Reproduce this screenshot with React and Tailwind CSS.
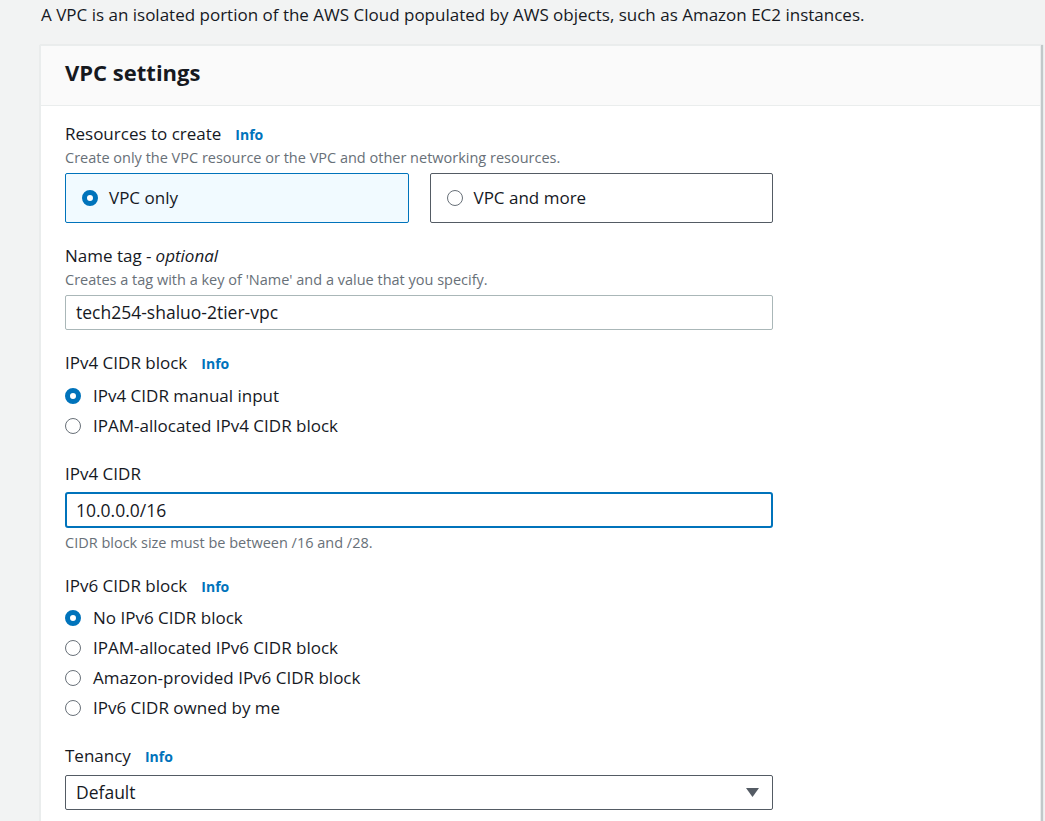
import React from "react";

const Info = () => (
  <span className="ml-[14px] text-[14px] font-bold text-[#0073bb]">Info</span>
);

const Radio = ({ checked }) =>
  checked ? (
    <span className="inline-block w-[16px] h-[16px] rounded-full border-[5px] border-[#0073bb] bg-white shrink-0" />
  ) : (
    <span className="inline-block w-[16px] h-[16px] rounded-full border-[1.5px] border-[#687078] bg-white shrink-0" />
  );

const RadioRow = ({ checked, label }) => (
  <div className="flex items-center h-[30px]">
    <Radio checked={checked} />
    <span className="ml-[12px] text-[17px] text-[#16191f]">{label}</span>
  </div>
);

const Label = ({ children, info }) => (
  <div className="flex items-baseline text-[17px] text-[#16191f] leading-[24px]">
    {children}
    {info && <Info />}
  </div>
);

const Hint = ({ children }) => (
  <div className="text-[14.5px] text-[#687078] leading-[20px]">{children}</div>
);

export default function App() {
  return (
    <div
      className="min-h-screen bg-[#f2f3f3] overflow-hidden"
      style={{ fontFamily: '"Open Sans", "Noto Sans", sans-serif' }}
    >
      {/* Intro */}
      <p className="pl-[41px] pt-[3px] text-[17px] text-[#16191f] leading-[24px]">
        A VPC is an isolated portion of the AWS Cloud populated by AWS objects, such as Amazon EC2 instances.
      </p>

      {/* Card */}
      <div className="ml-[40px] mt-[18px] w-[1001px] bg-white border border-[#eaeded] shadow-[1px_1px_1px_1px_rgba(0,28,36,0.2)]">
        <div className="h-[60px] bg-[#fafafa] border-b border-[#eaeded] flex items-center px-[24px] pb-[8px]">
          <h2 className="text-[22px] font-bold text-[#16191f] leading-none">VPC settings</h2>
        </div>

        <div className="px-[24px] pt-[16px] pb-[20px] w-[756px]">
          {/* Resources to create */}
          <Label info>Resources to create</Label>
          <div className="mt-[1px]">
            <Hint>Create only the VPC resource or the VPC and other networking resources.</Hint>
          </div>
          <div className="mt-[5px] grid grid-cols-2 gap-[21px]">
            <div className="h-[50px] flex items-center px-[16px] rounded-[2px] border border-[#0073bb] bg-[#f1faff]">
              <Radio checked />
              <span className="ml-[11px] text-[17px] text-[#16191f]">VPC only</span>
            </div>
            <div className="h-[50px] flex items-center px-[16px] rounded-[2px] border border-[#545b64]">
              <Radio />
              <span className="ml-[11px] text-[17px] text-[#16191f]">VPC and more</span>
            </div>
          </div>

          {/* Name tag */}
          <div className="mt-[21px]">
            <Label>
              Name tag - <span className="italic ml-[4px]">optional</span>
            </Label>
            <div className="mt-[2px]">
              <Hint>Creates a tag with a key of 'Name' and a value that you specify.</Hint>
            </div>
            <div className="mt-[5px] h-[35px] border border-[#aab7b8] rounded-[2px] flex items-center px-[10px] text-[17.5px] text-[#16191f]">
              tech254-shaluo-2tier-vpc
            </div>
          </div>

          {/* IPv4 CIDR block */}
          <div className="mt-[21px]">
            <Label info>IPv4 CIDR block</Label>
            <div className="mt-[5px]">
              <RadioRow checked label="IPv4 CIDR manual input" />
              <RadioRow label="IPAM-allocated IPv4 CIDR block" />
            </div>
          </div>

          {/* IPv4 CIDR */}
          <div className="mt-[21px]">
            <Label>IPv4 CIDR</Label>
            <div className="mt-[6px] h-[36px] border-2 border-[#0073bb] rounded-[3px] flex items-center px-[9px] text-[17.5px] text-[#16191f]">
              10.0.0.0/16
            </div>
            <div className="mt-[5px]">
              <Hint>CIDR block size must be between /16 and /28.</Hint>
            </div>
          </div>

          {/* IPv6 CIDR block */}
          <div className="mt-[21px]">
            <Label info>IPv6 CIDR block</Label>
            <div className="mt-[4px]">
              <RadioRow checked label="No IPv6 CIDR block" />
              <RadioRow label="IPAM-allocated IPv6 CIDR block" />
              <RadioRow label="Amazon-provided IPv6 CIDR block" />
              <RadioRow label="IPv6 CIDR owned by me" />
            </div>
          </div>

          {/* Tenancy */}
          <div className="mt-[21px]">
            <Label info>Tenancy</Label>
            <div className="mt-[6px] h-[35px] border border-[#545b64] rounded-[2px] flex items-center justify-between pl-[10px] pr-[13px] text-[17.5px] text-[#16191f]">
              <span>Default</span>
              <svg width="13" height="9" viewBox="0 0 13 9">
                <polygon points="0,0 13,0 6.5,9" fill="#545b64" />
              </svg>
            </div>
          </div>
        </div>
      </div>
    </div>
  );
}
